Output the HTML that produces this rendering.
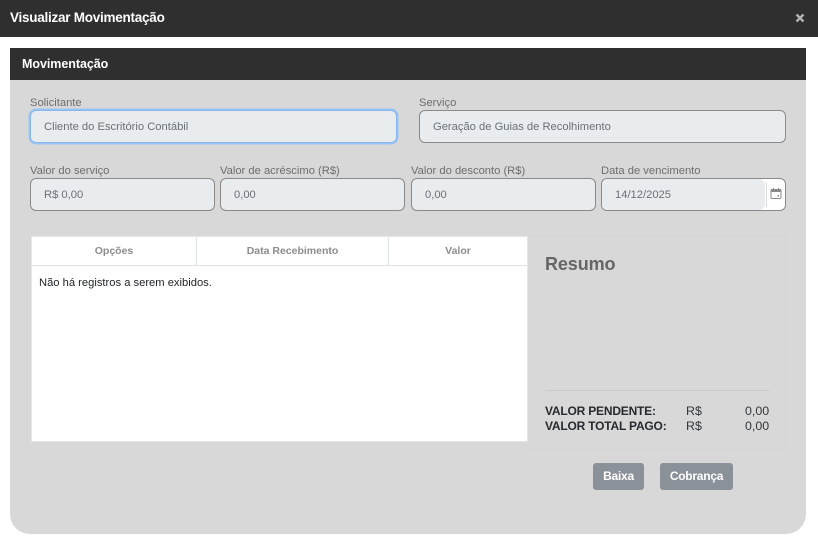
<!DOCTYPE html>
<html lang="pt"><head><meta charset="utf-8"><title>Visualizar Movimentação</title>
<style>
html,body{margin:0;padding:0;background:#fff}
body{position:relative;width:818px;height:552px;overflow:hidden;font-family:"Liberation Sans",sans-serif;font-size:11px;color:#6c757d}
.a{position:absolute;white-space:nowrap;line-height:14px}
.bar{position:absolute;background:#2f2f2f}
.lb{position:absolute;white-space:nowrap;line-height:14px;font-size:11.2px;color:#6e6e6e}
.in{position:absolute;box-sizing:border-box;height:33px;background:#e9ecef;border:1px solid #8a8a8a;border-radius:6px;line-height:33px;padding-left:13px;font-size:11.2px;color:#6a7076;white-space:nowrap}
.th{position:absolute;top:238px;height:28px;line-height:27px;text-align:center;font-weight:bold;color:#8c8c8c;font-size:10.5px;box-sizing:border-box}
.dv{position:absolute;top:237px;height:28px;width:1px;background:#dee2e6}
.b{font-weight:bold;color:#262a2e;font-size:12px;letter-spacing:-.2px}
.n{font-size:12.4px;color:#33373b}
.btn{position:absolute;top:463px;height:27px;line-height:27px;background:#8b9199;border-radius:3px;color:#fff;font-weight:bold;font-size:12px;text-align:center;letter-spacing:-.25px}
</style></head><body>
<div class="bar" style="left:0;top:0;width:818px;height:37px"></div>
<div class="a" style="left:10px;top:11px;color:#fff;font-weight:bold;font-size:13.5px;letter-spacing:-.25px">Visualizar Movimentação</div>
<svg style="position:absolute;left:795px;top:13px" width="10" height="10" viewBox="0 0 10 10"><path d="M1.5 1.5L8.5 8.5M8.5 1.5L1.5 8.5" stroke="#b4b4b4" stroke-width="2.3"/></svg>

<div style="position:absolute;left:10px;top:48px;width:796px;height:486px;background:#d8d8d8;border-radius:0 0 20px 20px"></div>
<div class="bar" style="left:10px;top:48px;width:796px;height:32px"></div>
<div class="a" style="left:22px;top:57px;color:#fff;font-weight:bold;font-size:12.5px;letter-spacing:-.05px">Movimentação</div>

<div class="lb" style="left:30px;top:96px">Solicitante</div>
<div class="in" style="left:30px;top:110px;width:367px;border-color:#86b7f0;box-shadow:0 0 0 1.5px #9cc4f2">Cliente do Escritório Contábil</div>
<div class="lb" style="left:419px;top:96px">Serviço</div>
<div class="in" style="left:419px;top:110px;width:367px">Geração de Guias de Recolhimento</div>

<div class="lb" style="left:30px;top:164px">Valor do serviço</div>
<div class="in" style="left:30px;top:178px;width:185px">R$ 0,00</div>
<div class="lb" style="left:220px;top:164px">Valor de acréscimo (R$)</div>
<div class="in" style="left:220px;top:178px;width:185px">0,00</div>
<div class="lb" style="left:411px;top:164px">Valor do desconto (R$)</div>
<div class="in" style="left:411px;top:178px;width:185px">0,00</div>
<div class="lb" style="left:601px;top:164px">Data de vencimento</div>
<div class="in" style="left:601px;top:178px;width:185px;background:#fff;padding:0;overflow:hidden">
<div style="position:absolute;left:0;top:0;bottom:0;width:163px;background:#e9ecef;border-radius:0 6px 6px 0;padding-left:13px;box-sizing:border-box;line-height:31px;padding-top:1px">14/12/2025</div>
<div style="position:absolute;left:164px;top:3px;bottom:3px;width:1px;background:#dcdcdc"></div>
</div>
<svg style="position:absolute;left:770px;top:187px" width="12" height="13" viewBox="0 0 12 13"><rect x="1" y="2.5" width="10" height="9" rx="1" fill="none" stroke="#8a8a8a" stroke-width="1"/><path d="M1 3h10v2H1z" fill="#8a8a8a"/><path d="M3.5 1v2M8.5 1v2" stroke="#8a8a8a" stroke-width="1"/><rect x="7.5" y="8" width="1.6" height="1.6" fill="#8a8a8a"/></svg>

<div style="position:absolute;left:31px;top:236px;width:497px;height:206px;box-sizing:border-box;background:#fff;border:1px solid #e4e6e8"></div>
<div style="position:absolute;left:32px;top:265px;width:495px;height:1px;background:#dee2e6"></div>
<div class="dv" style="left:196px"></div>
<div class="dv" style="left:388px"></div>
<div class="th" style="left:32px;width:164px">Opções</div>
<div class="th" style="left:197px;width:191px">Data Recebimento</div>
<div class="th" style="left:389px;width:138px">Valor</div>
<div class="a" style="left:39px;top:276px;color:#212529;font-size:11.2px">Não há registros a serem exibidos.</div>

<div style="position:absolute;left:528px;top:236px;width:258px;height:214px;box-sizing:border-box;border:1px solid #d4d4d4;border-left:0"></div>
<div class="a" style="left:545px;top:253px;line-height:22px;font-size:18px;font-weight:bold;color:#666;letter-spacing:-.1px">Resumo</div>
<div style="position:absolute;left:545px;top:390px;width:224px;height:1px;background:#c9c9c9"></div>
<div class="a b" style="left:545px;top:404px">VALOR PENDENTE:</div>
<div class="a n" style="left:686px;top:404px">R$</div>
<div class="a n" style="left:745px;top:404px">0,00</div>
<div class="a b" style="left:545px;top:419px">VALOR TOTAL PAGO:</div>
<div class="a n" style="left:686px;top:419px">R$</div>
<div class="a n" style="left:745px;top:419px">0,00</div>

<div class="btn" style="left:593px;width:51px">Baixa</div>
<div class="btn" style="left:660px;width:73px">Cobrança</div>
</body></html>
